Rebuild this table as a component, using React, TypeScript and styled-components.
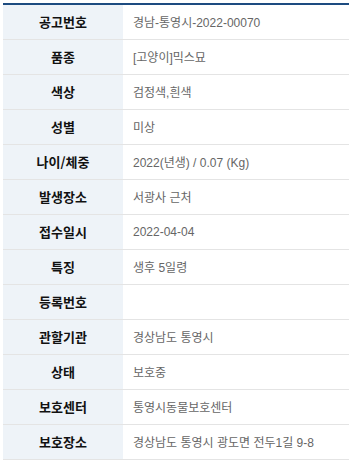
import styled, { createGlobalStyle } from "styled-components";

const GlobalStyle = createGlobalStyle`
  html, body {
    margin: 0;
    padding: 0;
    background: #ffffff;
  }
  body {
    padding: 3px 0 0 3px;
    font-family: "Liberation Sans", "Noto Sans CJK KR", sans-serif;
  }
`;

const InfoTable = styled.table`
  width: 346px;
  border-collapse: collapse;
  border-top: 2px solid #1d4b80;
  table-layout: fixed;
`;

const Row = styled.tr`
  height: 35px;
  border-bottom: 1px solid #e4e4e4;
`;

const Label = styled.th`
  width: 120px;
  padding: 0;
  background: #eef3f8;
  color: #111111;
  font-family: "Noto Sans CJK KR", sans-serif;
  font-size: 13px;
  font-weight: 700;
  text-align: center;
  vertical-align: middle;
`;

const Value = styled.td`
  padding: 0 0 0 10px;
  color: #666666;
  font-family: "Liberation Sans", "Noto Sans CJK KR", sans-serif;
  font-size: 12px;
  text-align: left;
  vertical-align: middle;
  white-space: nowrap;
`;

const rows: [string, string][] = [
  ["공고번호", "경남-통영시-2022-00070"],
  ["품종", "[고양이]믹스묘"],
  ["색상", "검정색,흰색"],
  ["성별", "미상"],
  ["나이/체중", "2022(년생) / 0.07 (Kg)"],
  ["발생장소", "서광사 근처"],
  ["접수일시", "2022-04-04"],
  ["특징", "생후 5일령"],
  ["등록번호", ""],
  ["관할기관", "경상남도 통영시"],
  ["상태", "보호중"],
  ["보호센터", "통영시동물보호센터"],
  ["보호장소", "경상남도 통영시 광도면 전두1길 9-8"],
];

const App = () => {
  return (
    <>
      <GlobalStyle />
      <InfoTable>
        <tbody>
          {rows.map(([label, value], i) => (
            <Row key={i}>
              <Label scope="row">{label}</Label>
              <Value>{value}</Value>
            </Row>
          ))}
        </tbody>
      </InfoTable>
    </>
  );
};

export default App;
